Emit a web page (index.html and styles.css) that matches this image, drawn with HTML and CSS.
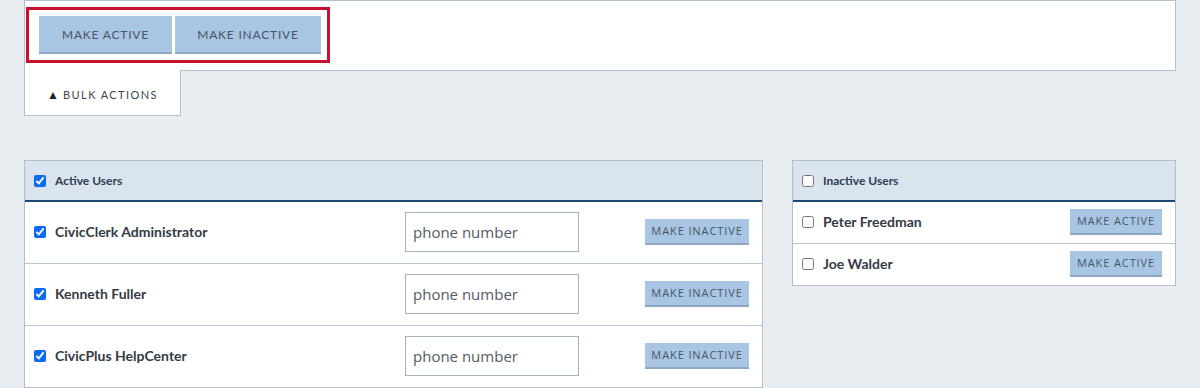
FILE: index.html
```html
<!DOCTYPE html>
<html lang="en">
<head>
<meta charset="utf-8">
<title>Users</title>
<link rel="stylesheet" href="styles.css">
</head>
<body>
<div class="page">
  <section class="bulk">
    <div class="bulk-panel">
      <div class="highlight">
        <button class="bulk-btn btn-active">MAKE ACTIVE</button>
        <button class="bulk-btn btn-inactive">MAKE INACTIVE</button>
      </div>
    </div>
    <div class="bulk-tab"><span class="caret">&#9650;</span> BULK ACTIONS</div>
  </section>

  <div class="lists">
    <div class="panel panel-active">
      <div class="panel-head">
        <input type="checkbox" class="cb" checked>
        <span class="head-label">Active Users</span>
      </div>
      <div class="row row-tall">
        <input type="checkbox" class="cb" checked>
        <span class="name">CivicClerk Administrator</span>
        <input type="text" class="phone" placeholder="phone number">
        <button class="small-btn btn-make-inactive">MAKE INACTIVE</button>
      </div>
      <div class="row row-tall">
        <input type="checkbox" class="cb" checked>
        <span class="name">Kenneth Fuller</span>
        <input type="text" class="phone" placeholder="phone number">
        <button class="small-btn btn-make-inactive">MAKE INACTIVE</button>
      </div>
      <div class="row row-tall">
        <input type="checkbox" class="cb" checked>
        <span class="name">CivicPlus HelpCenter</span>
        <input type="text" class="phone" placeholder="phone number">
        <button class="small-btn btn-make-inactive">MAKE INACTIVE</button>
      </div>
    </div>

    <div class="panel panel-inactive">
      <div class="panel-head">
        <input type="checkbox" class="cb">
        <span class="head-label">Inactive Users</span>
      </div>
      <div class="row row-short">
        <input type="checkbox" class="cb">
        <span class="name">Peter Freedman</span>
        <button class="small-btn">MAKE ACTIVE</button>
      </div>
      <div class="row row-short">
        <input type="checkbox" class="cb">
        <span class="name">Joe Walder</span>
        <button class="small-btn">MAKE ACTIVE</button>
      </div>
    </div>
  </div>
</div>
</body>
</html>
```

FILE: styles.css
```css
* { box-sizing: border-box; }

html, body {
  margin: 0;
  padding: 0;
  background: #e8edf2;
  font-family: "Lato", "Open Sans", sans-serif;
}

.page {
  padding: 0 24px;
}

.bulk-panel {
  background: #ffffff;
  border: 1px solid #b3bfcd;
  height: 71px;
  padding: 6px 0 0 1px;
}

.highlight {
  display: inline-flex;
  gap: 3px;
  border: 3px solid #c8102e;
  padding: 6px 6px 6px 10px;
}

.bulk-btn {
  height: 38px;
  border: none;
  border-bottom: 2px solid #8ea7c2;
  background: #a8c6e4;
  color: #4b5260;
  font-family: "Lato", sans-serif;
  font-size: 12px;
  letter-spacing: 0.8px;
  padding: 0;
  margin: 0;
  white-space: nowrap;
}

.btn-active { width: 133px; }
.btn-inactive { width: 146px; }

.bulk-tab {
  width: 157px;
  height: 46px;
  margin-top: -1px;
  background: #ffffff;
  border: 1px solid #b3bfcd;
  border-top: none;
  padding: 17px 0 0 22px;
  font-size: 11px;
  letter-spacing: 1.4px;
  color: #3d4450;
  white-space: nowrap;
}

.caret {
  font-size: 12px;
  letter-spacing: 0;
  color: #222;
}

.lists {
  display: flex;
  align-items: flex-start;
  gap: 29px;
  margin-top: 44px;
}

.panel {
  background: #ffffff;
  border: 1px solid #b3bfcd;
}

.panel-active { width: 739px; }
.panel-inactive { flex: 1; }

.panel-head {
  display: flex;
  align-items: center;
  height: 41px;
  background: #dae4ef;
  border-bottom: 2px solid #1c4a74;
  padding-left: 9px;
}

.cb {
  width: 12px;
  height: 12px;
  margin: 0 9px 0 0;
  accent-color: #0a6cf5;
}

.head-label {
  font-size: 12px;
  font-weight: 700;
  color: #2c3d52;
}

.row {
  display: flex;
  align-items: center;
  padding: 0 13px 2px 9px;
  border-top: 1px solid #b9c5d3;
}

.panel-head + .row { border-top: none; }

.row-tall { height: 62px; }
.row-short { height: 42px; }
.panel-head + .row-tall { height: 61px; }
.panel-head + .row-short { height: 41px; }

.name {
  flex: 1;
  font-size: 14px;
  font-weight: 700;
  color: #333a44;
}

.phone {
  width: 174px;
  height: 40px;
  border: 1px solid #a8b2bf;
  padding: 0 7px;
  font-family: "Open Sans", sans-serif;
  font-size: 15px;
  color: #333;
  margin-right: 66px;
  background: #fff;
}

.phone::placeholder {
  color: #545b63;
  opacity: 1;
}

.small-btn {
  height: 26px;
  border: none;
  border-bottom: 2px solid #8ea7c2;
  background: #a8c6e4;
  color: #4b5562;
  font-family: "Open Sans", sans-serif;
  font-size: 11px;
  letter-spacing: 0.9px;
  padding: 0;
  margin: 0;
  white-space: nowrap;
}

.btn-make-inactive { width: 104px; }
.panel-inactive .small-btn { width: 92px; }
```
